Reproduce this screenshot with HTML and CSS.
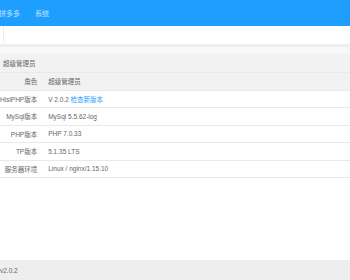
FILE: index.html
```html
<!DOCTYPE html>
<html lang="zh">
<head>
<meta charset="utf-8">
<title>系统信息</title>
<link rel="stylesheet" href="styles.css">
</head>
<body>
<div class="page">
  <header class="topbar">
    <nav class="topnav">
      <span class="navitem">拼多多</span>
      <span class="navitem">系统</span>
    </nav>
  </header>
  <div class="tabbar"><div class="tab-edge"></div></div>
  <div class="gap"></div>
  <main class="content">
    <table class="info">
      <thead>
        <tr class="head"><th colspan="2">超级管理员</th></tr>
        <tr class="sub"><td class="lbl">角色</td><td class="val">超级管理员</td></tr>
      </thead>
      <tbody>
        <tr><td class="lbl">HisiPHP版本</td><td class="val">V 2.0.2 <a class="link">检查新版本</a></td></tr>
        <tr><td class="lbl">MySql版本</td><td class="val">MySql 5.5.62-log</td></tr>
        <tr><td class="lbl">PHP版本</td><td class="val">PHP 7.0.33</td></tr>
        <tr><td class="lbl">TP版本</td><td class="val">5.1.35 LTS</td></tr>
        <tr><td class="lbl">服务器环境</td><td class="val">Linux / nginx/1.15.10</td></tr>
      </tbody>
    </table>
  </main>
  <footer class="footer">v2.0.2</footer>
</div>
</body>
</html>
```
FILE: styles.css
```css
html, body {
  margin: 0;
  padding: 0;
  width: 350px;
  height: 280px;
  overflow: hidden;
  background: #fff;
  font-family: "Liberation Sans", "Noto Sans CJK SC", sans-serif;
  color: #666;
}
.page {
  display: flex;
  flex-direction: column;
  height: 280px;
}
.topbar {
  height: 26px;
  background: #1e9fff;
  display: flex;
  align-items: center;
  flex: none;
}
.topnav {
  display: flex;
  gap: 15px;
  margin-left: -1px;
}
.navitem {
  font-size: 7px;
  color: rgba(255, 255, 255, 0.75);
}
.tabbar {
  height: 18px;
  background: #fff;
  flex: none;
  display: flex;
  padding-left: 3px;
}
.tab-edge {
  width: 1px;
  background: #ececec;
  height: 17px;
}
.gap {
  height: 3px;
  background: #efefef;
  border-bottom: 7px solid #f8f8f8;
  flex: none;
}
.content {
  flex: 1;
  background: #fff;
}
.info {
  width: 100%;
  border-collapse: collapse;
  font-size: 6.5px;
}
.info th, .info td {
  border-bottom: 1px solid #e9e9e9;
  padding: 0;
  font-weight: normal;
}
.head th {
  height: 18px;
  text-align: left;
  padding-left: 3px;
  background: #f2f2f2;
}
.sub td { background: #f2f2f2; }
.info tr td { height: 16.5px; }
.lbl {
  width: 36px;
  text-align: right;
  padding-right: 11px !important;
  white-space: nowrap;
}
.val {
  padding-left: 1px;
}
.link { color: #1e9fff; }
.footer {
  height: 20px;
  flex: none;
  background: #eee;
  font-size: 6.5px;
  display: flex;
  align-items: center;
  padding-left: 0;
  color: #666;
}
```
